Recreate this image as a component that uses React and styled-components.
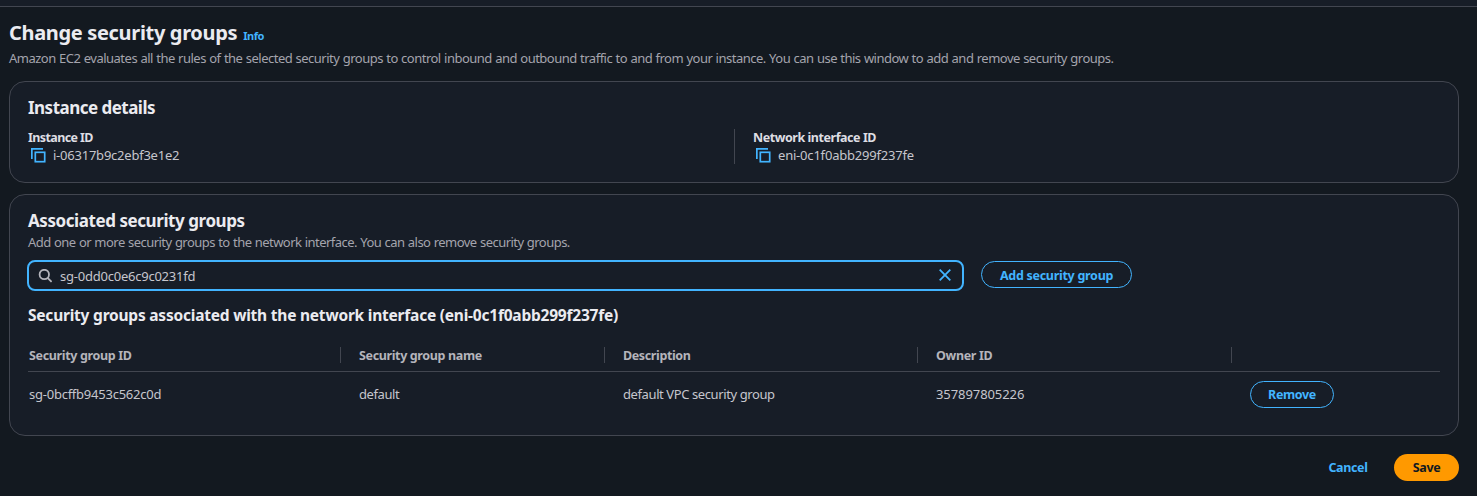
import React from "react";
import styled, { createGlobalStyle } from "styled-components";

const c = {
  page: "#131920",
  panel: "#171d27",
  line: "#424650",
  heading: "#ebebf0",
  body: "#c6c6cd",
  muted: "#a4a4ad",
  accent: "#42b4ff",
  primary: "#ff9900",
};

const Global = createGlobalStyle`
  * { box-sizing: border-box; }
  body { margin: 0; background: ${c.page}; color: ${c.body}; }
  body, input, button { font-family: "Noto Sans", "Open Sans", sans-serif; font-size: 13px; }
  h1, h2, h3, p { margin: 0; }
`;

const Page = styled.div`
  height: 496px;
  overflow: hidden;
`;

const TopStrip = styled.div`
  height: 7px;
  background: ${c.panel};
  border-bottom: 1px solid ${c.line};
`;

const Main = styled.main`
  padding: 14px 18px 0 9px;
`;

const Text = styled.span`
  display: block;
  white-space: nowrap;
  color: ${(p) => p.$color || c.body};
  font-size: ${(p) => p.$size || 13}px;
  font-weight: ${(p) => p.$weight || 400};
  line-height: ${(p) => p.$line || 18}px;
  letter-spacing: ${(p) => p.$track || 0}px;
`;

const Description = styled(Text).attrs({ as: "p", $color: c.muted })`
  word-spacing: 0.45px;
`;

const Label = styled(Text).attrs({ $weight: 700, $size: 12.5 })`
  padding-top: ${(p) => p.$drop || 0}px;
`;

const TitleRow = styled.div`
  display: flex;
  align-items: baseline;
  gap: 6px;
  height: 28px;
`;

const Card = styled.section`
  height: ${(p) => p.$height}px;
  margin-top: ${(p) => p.$gap}px;
  padding: 14px 18px 0;
  background: ${c.panel};
  border: 1px solid ${c.line};
  border-radius: 16px;
`;

const Details = styled.div`
  display: grid;
  grid-template-columns: 706px 1fr;
  margin-top: 9px;
`;

const Detail = styled.div`
  height: 35px;
  padding-left: ${(p) => (p.$divided ? 18 : 0)}px;
  border-left: ${(p) => (p.$divided ? `1px solid ${c.line}` : "none")};
`;

const CopyRow = styled.div`
  display: flex;
  align-items: center;
  gap: 7px;
  margin-top: -1px;
  padding-left: 3px;
`;

const SearchRow = styled.div`
  display: flex;
  align-items: flex-start;
  gap: 17px;
  margin: 9px 0 0 -1px;
`;

const SearchBox = styled.div`
  display: flex;
  align-items: center;
  width: 937px;
  height: 31px;
  padding: 0 11px 0 9px;
  border: 2px solid ${c.accent};
  border-radius: 8px;
`;

const SearchValue = styled(Text)`
  flex: 1;
  margin-left: 8px;
`;

const Button = styled.button`
  display: flex;
  align-items: center;
  justify-content: center;
  width: ${(p) => p.$width}px;
  height: 27px;
  margin: 0;
  padding: 0;
  border: ${(p) => (p.$kind ? "none" : `1px solid ${c.accent}`)};
  border-radius: 14px;
  background: ${(p) => (p.$kind === "primary" ? c.primary : "transparent")};
`;

const AddButton = styled(Button)`
  margin-top: 1px;
`;

const Row = styled.div`
  display: grid;
  grid-template-columns: 313px 264px 313px 314px 1fr;
  align-items: center;
  height: ${(p) => (p.$head ? 29 : 45)}px;
  padding-bottom: ${(p) => (p.$head ? 5 : 0)}px;
  border-bottom: ${(p) => (p.$head ? `1px solid ${c.line}` : "none")};
`;

const Cell = styled.div`
  display: flex;
  align-items: center;
  height: ${(p) => (p.$head ? 16 : 27)}px;
  padding-left: ${(p) => (p.$first ? 1 : 18)}px;
  border-right: ${(p) => (p.$head && !p.$last ? `1px solid ${c.line}` : "none")};
`;

const Table = styled.div`
  margin-top: 4px;
`;

const Footer = styled.footer`
  display: flex;
  justify-content: flex-end;
  gap: 8px;
  margin-top: 18px;
`;

const CopyIcon = () => (
  <svg width="15" height="15" viewBox="0 0 15 15" fill="none" stroke={c.accent} strokeWidth="1.7">
    <path d="M0.85 11V0.85H12" />
    <rect x="4.3" y="4.3" width="9.4" height="9.4" />
  </svg>
);

const SearchIcon = () => (
  <svg width="14" height="14" viewBox="0 0 14 14" fill="none" stroke="#b4b4bb" strokeWidth="1.8">
    <circle cx="6.3" cy="5.5" r="4.7" />
    <path d="M9.6 8.8L13.6 12.8" />
  </svg>
);

const CloseIcon = () => (
  <svg width="12" height="14" viewBox="0 0 12 14" fill="none" stroke={c.accent} strokeWidth="1.8">
    <path d="M0.7 0.7L11.3 11.3M11.3 0.7L0.7 11.3" />
  </svg>
);

const headers = [
  { text: "Security group ID", track: -0.34 },
  { text: "Security group name", track: -0.36 },
  { text: "Description", track: -0.38 },
  { text: "Owner ID", track: -0.35 },
  { text: "", track: 0 },
];

const values = [
  { text: "sg-0bcffb9453c562c0d", track: -0.24 },
  { text: "default", track: -0.42 },
  { text: "default VPC security group", track: -0.4 },
  { text: "357897805226", track: -0.08 },
];

export default function App() {
  return (
    <>
      <Global />
      <Page>
        <TopStrip />
        <Main>
          <TitleRow>
            <Text as="h1" $size={20} $weight={700} $line={24} $track={-0.33} $color={c.heading}>Change security groups</Text>
            <Text $size={11} $weight={700} $line={16} $track={-0.45} $color={c.accent}>Info</Text>
          </TitleRow>
          <Description $track={-0.505}>
            Amazon EC2 evaluates all the rules of the selected security groups to control inbound and outbound traffic to and from your instance. You can use this window to add and remove security groups.
          </Description>

          <Card $height={102} $gap={14}>
            <Text as="h2" $size={17} $weight={700} $line={24} $track={-0.52} $color={c.heading}>Instance details</Text>
            <Details>
              <Detail>
                <Label $track={-0.6} $color="#dedee3">Instance ID</Label>
                <CopyRow><CopyIcon /><Text $track={-0.23}>i-06317b9c2ebf3e1e2</Text></CopyRow>
              </Detail>
              <Detail $divided>
                <Label $track={-0.45} $color="#dedee3">Network interface ID</Label>
                <CopyRow><CopyIcon /><Text $track={-0.2}>eni-0c1f0abb299f237fe</Text></CopyRow>
              </Detail>
            </Details>
          </Card>

          <Card $height={242} $gap={11}>
            <Text as="h2" $size={17} $weight={700} $line={24} $track={-0.43} $color={c.heading}>Associated security groups</Text>
            <Description $track={-0.535}>Add one or more security groups to the network interface. You can also remove security groups.</Description>
            <SearchRow>
              <SearchBox>
                <SearchIcon />
                <SearchValue $track={-0.23}>sg-0dd0c0e6c9c0231fd</SearchValue>
                <CloseIcon />
              </SearchBox>
              <AddButton $width={151}><Label $drop={2} $track={-0.28} $color={c.accent}>Add security group</Label></AddButton>
            </SearchRow>
            <Text as="h3" $size={15.5} $weight={700} $line={48} $track={-0.22} $color={c.heading}>Security groups associated with the network interface (eni-0c1f0abb299f237fe)</Text>
            <Table>
              <Row $head>
                {headers.map((h, i) => (
                  <Cell key={h.text} $head $first={i === 0} $last={i === 4}>
                    <Label $drop={2} $track={h.track} $color="#b4b4bb">{h.text}</Label>
                  </Cell>
                ))}
              </Row>
              <Row>
                {values.map((v, i) => (
                  <Cell key={v.text} $first={i === 0}><Text $line={17} $track={v.track}>{v.text}</Text></Cell>
                ))}
                <Cell><Button $width={84}><Label $line={17} $track={-0.35} $color={c.accent}>Remove</Label></Button></Cell>
              </Row>
            </Table>
          </Card>

          <Footer>
            <Button $kind="link" $width={76}><Label $line={17} $track={-0.35} $color={c.accent}>Cancel</Label></Button>
            <Button $kind="primary" $width={65}><Label $line={17} $track={-0.35} $color="#131920">Save</Label></Button>
          </Footer>
        </Main>
      </Page>
    </>
  );
}
